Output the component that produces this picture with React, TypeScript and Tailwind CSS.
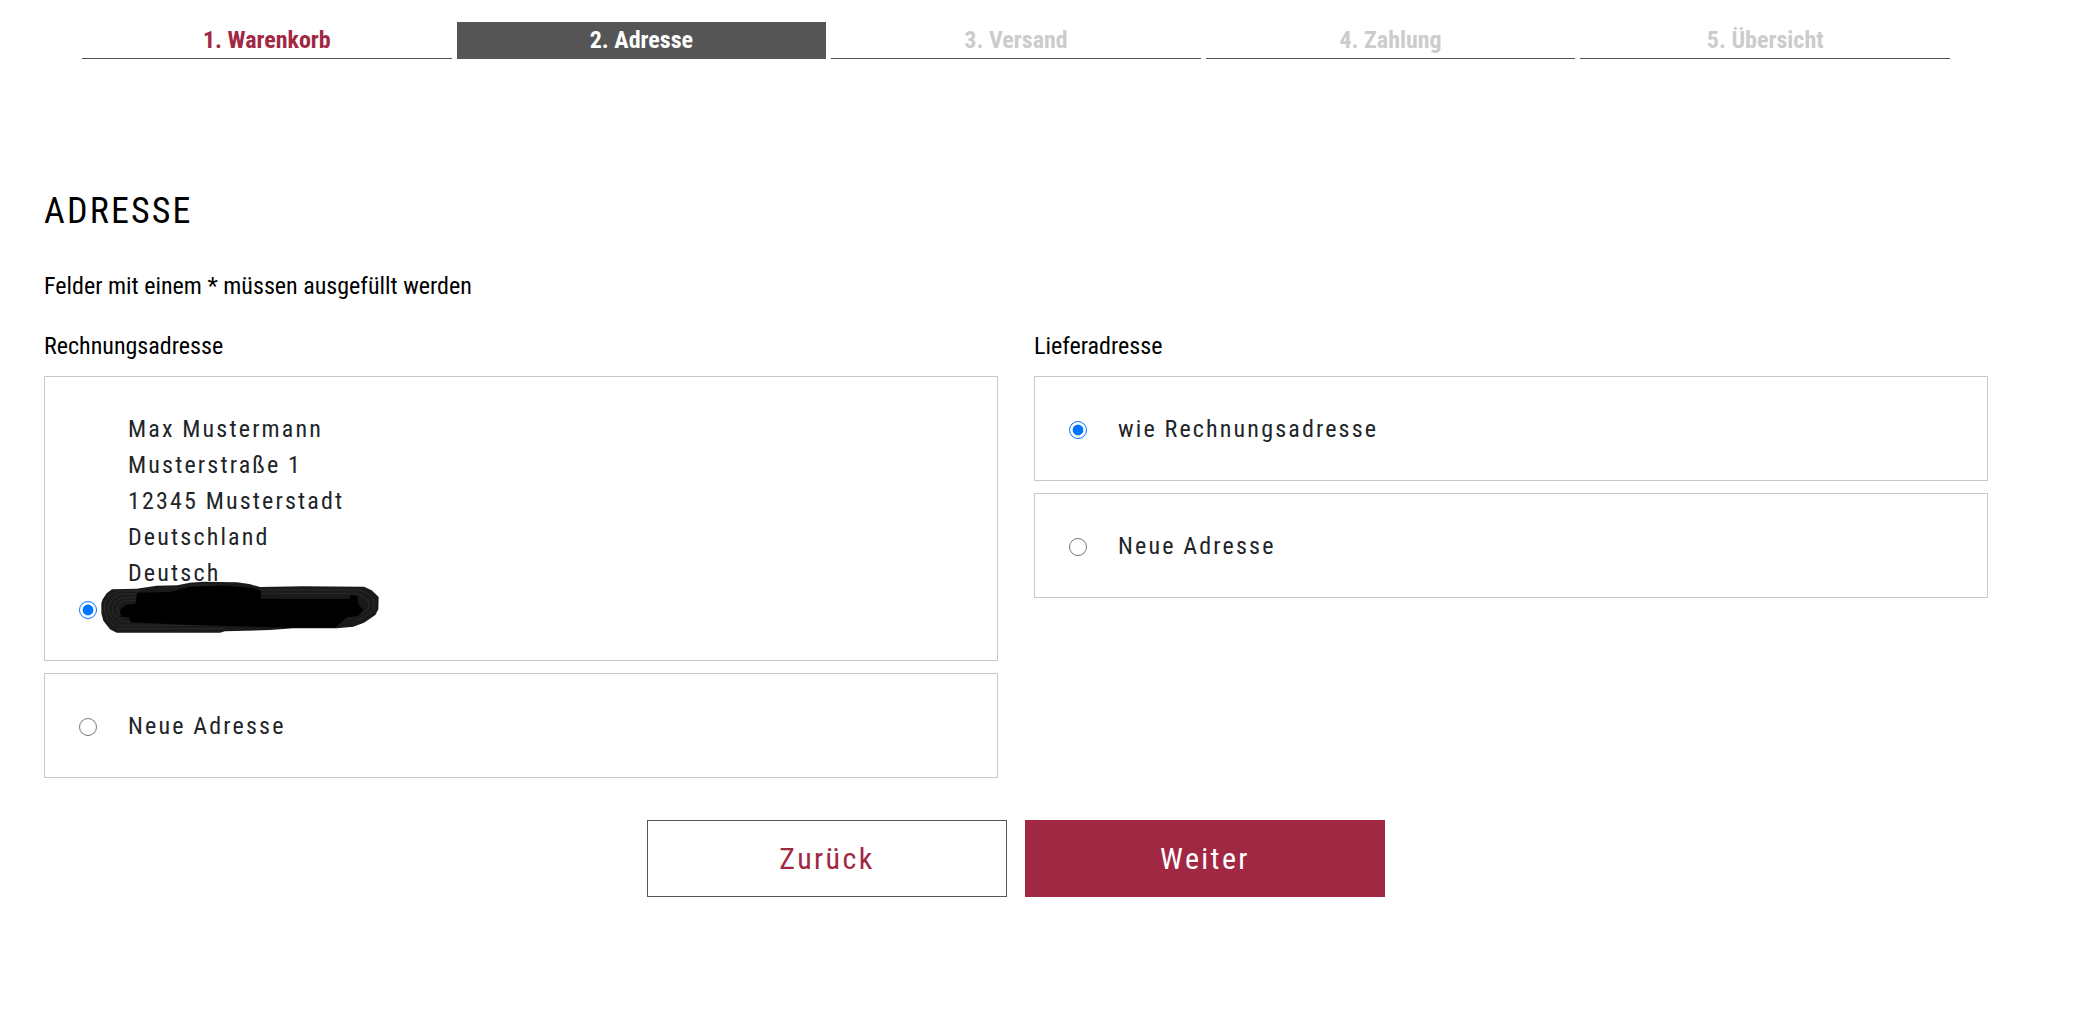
import clsx from "clsx";
import { ReactNode, useState } from "react";

const steps = [
  { name: "1. Warenkorb", state: "done" },
  { name: "2. Adresse", state: "active" },
  { name: "3. Versand", state: "open" },
  { name: "4. Zahlung", state: "open" },
  { name: "5. Übersicht", state: "open" },
];

const addressLines = [
  "Max Mustermann",
  "Musterstraße 1",
  "12345 Musterstadt",
  "Deutschland",
  "Deutsch",
];

function Scribble() {
  return (
    <svg
      viewBox="30 60 840 162"
      className="absolute -top-[11px] -left-7 h-[54px] w-[280px]"
      aria-hidden="true"
    >
      <path
        d="M34 130 L38 118 L50 100 L66 88 L140 86 L200 77 L262 76 L300 68 L340 65 L440 67 L478 72 L510 81 L640 79 L822 80 L845 91 L866 111 L865 148 L856 165 L822 188 L790 200 L740 205 L610 205 L540 210 L405 214 L390 218 L80 218 L60 208 L40 182 L34 160 Z"
        fill="#1a1a1a"
      />
      <g fill="none" stroke="#333" strokeWidth="2">
        <path d="M150 93 H84 L62 104 L44 128 V158 L60 188 L84 206 H400" />
        <path d="M150 102 H90 L70 113 L56 134 V156 L70 180 L90 196 H350" />
        <path d="M150 112 H98 L80 122 L68 138 V156 L80 172 L98 186 H300" />
        <path d="M150 122 H102 L88 132 L80 144 L88 164 L104 176" />
        <path d="M505 90 H810 L834 100 L852 120 V146 L836 164 L800 182" />
        <path d="M505 100 H800 L822 110 L838 128 L834 148 L812 166" />
        <path d="M300 76 Q400 70 505 92" />
      </g>
      <path
        d="M90 150 L108 134 L136 132 L142 98 L240 96 L300 80 L400 76 L490 84 L512 92 L514 116 L730 117 L778 116 L782 106 L802 108 L806 134 L820 150 L804 168 L770 172 L735 203 L600 203 L300 195 L122 187 L118 172 L92 170 Z"
        fill="#000"
      />
    </svg>
  );
}

interface OptionProps {
  name: string;
  value: string;
  selected: string;
  onSelect: (value: string) => void;
  children: ReactNode;
}

function AddressOption({ name, value, selected, onSelect, children }: OptionProps) {
  return (
    <label className="flex items-end gap-[31px] border border-[#c8c8c8] px-[34px] pt-[34px] pb-[33px] tracking-[0.09em] text-[#212529]">
      <input
        type="radio"
        name={name}
        value={value}
        checked={selected === value}
        onChange={() => onSelect(value)}
        className="mb-2 size-[18px] shrink-0 accent-[#0075ff]"
      />
      <span>{children}</span>
    </label>
  );
}

export default function App() {
  const [billing, setBilling] = useState("saved");
  const [shipping, setShipping] = useState("same");

  return (
    <div className="bg-white pt-[22px] pr-[106px] pb-28 pl-11 font-['Roboto_Condensed','Roboto','Liberation_Sans_Narrow',sans-serif] text-[24px] leading-9 text-black">
      <nav className="mx-[38px]">
        <ol className="grid grid-cols-5 gap-[5px]">
          {steps.map((step) => (
            <li
              key={step.name}
              className={clsx("border-b border-[#555] text-center font-bold", {
                "text-[#a12843]": step.state === "done",
                "bg-[#555] text-white": step.state === "active",
                "text-[#ccc]": step.state === "open",
              })}
            >
              {step.state === "done" ? <a href="#warenkorb">{step.name}</a> : step.name}
            </li>
          ))}
        </ol>
      </nav>

      <main>
        <h1 className="mt-[125px] text-[36px] leading-[54px] tracking-[0.06em] uppercase">
          Adresse
        </h1>
        <p className="mt-[30px]">Felder mit einem * müssen ausgefüllt werden</p>

        <form onSubmit={(e) => e.preventDefault()}>
          <div className="mt-6 grid grid-cols-2 items-start gap-9">
            <fieldset>
              <legend>Rechnungsadresse</legend>
              <div className="mt-3 flex flex-col gap-3">
                <AddressOption name="billing" value="saved" selected={billing} onSelect={setBilling}>
                  {addressLines.map((line) => (
                    <span key={line} className="block">
                      {line}
                    </span>
                  ))}
                  <span className="relative block h-9">
                    <Scribble />
                  </span>
                </AddressOption>
                <AddressOption name="billing" value="new" selected={billing} onSelect={setBilling}>
                  Neue Adresse
                </AddressOption>
              </div>
            </fieldset>

            <fieldset>
              <legend>Lieferadresse</legend>
              <div className="mt-3 flex flex-col gap-3">
                <AddressOption name="shipping" value="same" selected={shipping} onSelect={setShipping}>
                  wie Rechnungsadresse
                </AddressOption>
                <AddressOption name="shipping" value="new" selected={shipping} onSelect={setShipping}>
                  Neue Adresse
                </AddressOption>
              </div>
            </fieldset>
          </div>

          <div className="mt-[42px] flex justify-center gap-[18px] text-[30px] tracking-[0.08em]">
            <button
              type="button"
              className="h-[77px] w-[360px] border border-[#555] text-[#a12843]"
            >
              Zurück
            </button>
            <button
              type="submit"
              className="h-[77px] w-[360px] bg-[#a12843] text-white"
            >
              Weiter
            </button>
          </div>
        </form>
      </main>
    </div>
  );
}
